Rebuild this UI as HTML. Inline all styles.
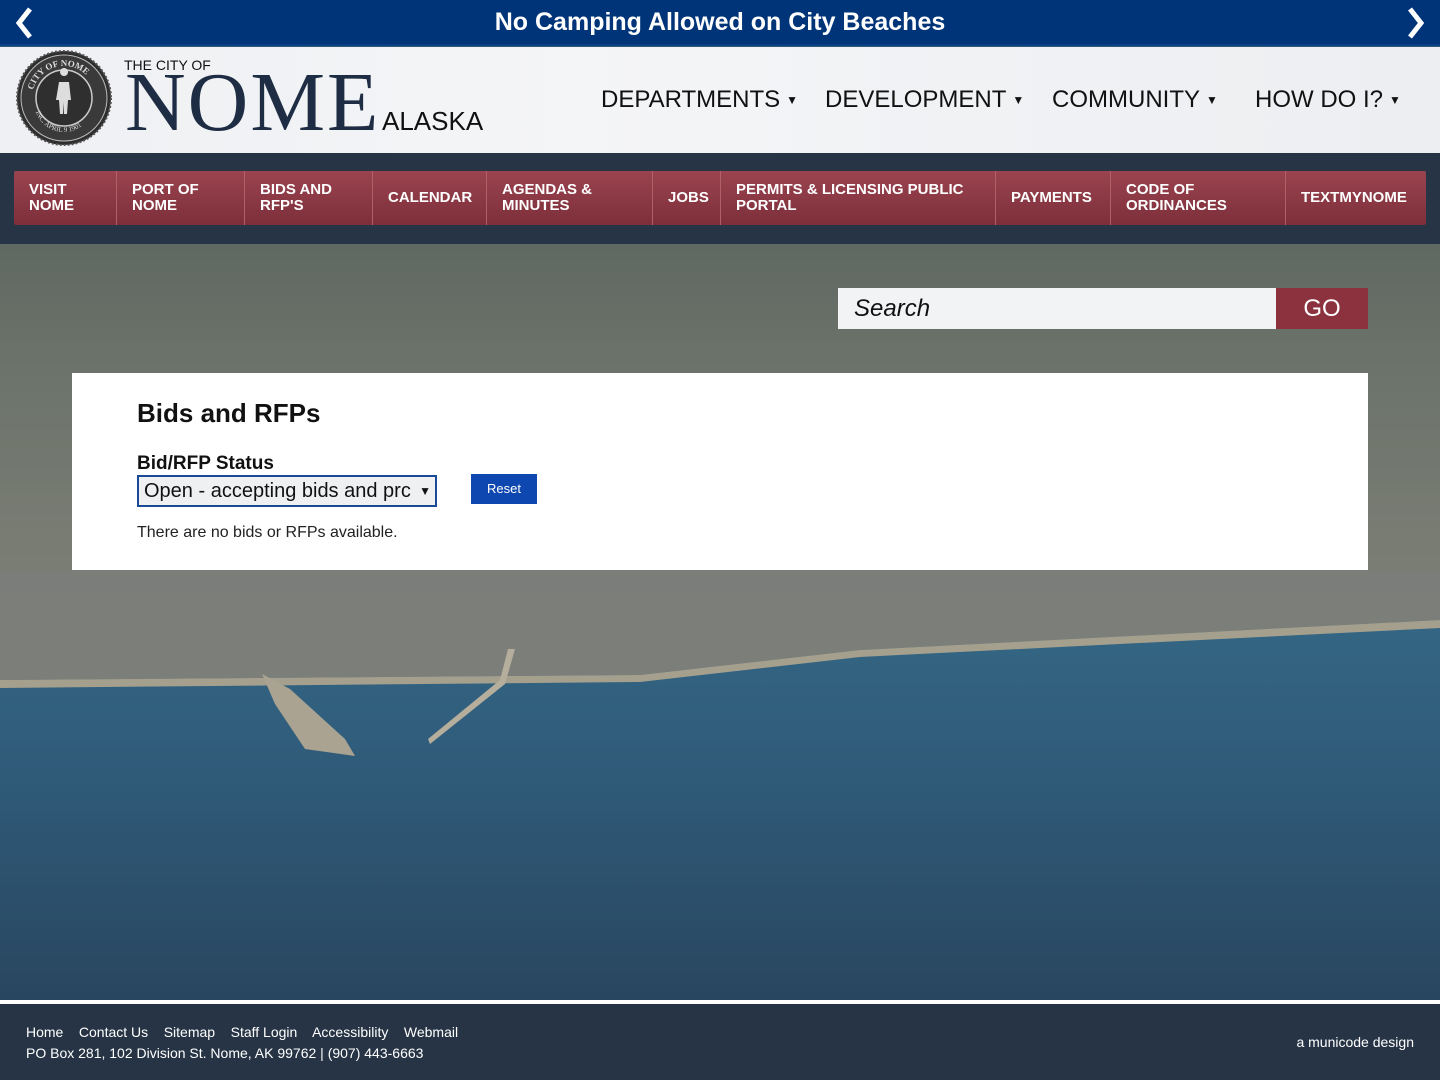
<!DOCTYPE html>
<html><head><meta charset="utf-8"><style>
*{margin:0;padding:0;box-sizing:border-box}
body{width:1440px;height:1080px;overflow:hidden;font-family:"Liberation Sans",sans-serif;position:relative;background:#2f5a78}
.a{position:absolute}
#top{left:0;top:0;width:1440px;height:46px;background:#003478;border-bottom:2px solid #0d3f86;color:#fff;text-align:center;font-weight:bold;font-size:25px;line-height:44px}
#hdr{left:0;top:47px;width:1440px;height:106px;background:linear-gradient(90deg,#eef0f3,#f4f5f7 40%,#eceef1)}
#navbg{left:0;top:153px;width:1440px;height:91px;background:#263445}
#nav{left:14px;top:171px;width:1412px;height:54px;display:flex;background:linear-gradient(#9b4450,#7c2f3a);border-radius:2px}
#nav div{color:#fff;font-weight:bold;font-size:15px;line-height:16px;padding:0 15px;display:flex;align-items:center;border-right:1px solid #b06068;height:54px}
#nav div:last-child{border-right:none}
.m{font-size:24px;color:#111;font-weight:normal;top:86px}
.m b{font-size:12px;font-weight:normal;margin-left:6px;position:relative;top:-3px}
#main{left:72px;top:373px;width:1296px;height:197px;background:#fff}
#foot{left:0;top:1000px;width:1440px;height:80px;background:#263445;border-top:4px solid #fff;color:#fff;font-size:14px}
</style></head><body>
<svg class="a" style="left:0;top:244px" width="1440" height="756">
<defs>
<linearGradient id="land" x1="0" y1="0" x2="0" y2="1">
<stop offset="0" stop-color="#5f6862"/><stop offset=".18" stop-color="#6d746b"/><stop offset=".45" stop-color="#7c7e75"/><stop offset=".75" stop-color="#86847b"/><stop offset="1" stop-color="#8e8b80"/></linearGradient>
<linearGradient id="sea" x1="0" y1="0" x2="0" y2="1">
<stop offset="0" stop-color="#346684"/><stop offset=".4" stop-color="#2f5b79"/><stop offset="1" stop-color="#294660"/></linearGradient>
</defs>
<rect width="1440" height="756" fill="url(#land)"/>
<path d="M0 326 L1440 326 L1440 376 L860 406 L640 431 L0 436Z" fill="#7a7d7c" opacity=".6"/>
<path d="M0 436 L640 431 L860 406 L1440 376 L1440 756 L0 756Z" fill="url(#sea)"/>
<path d="M0 436 L640 431 L860 406 L1440 376 L1440 384 L860 413 L640 438 L0 444Z" fill="#a59f8d"/>
<path d="M262 430 L275 460 L305 505 L355 512 L345 495 L290 445Z" fill="#aaa392"/>
<path d="M430 500 L505 440 L515 405 L508 405 L500 436 L428 495Z" fill="#b5ae9c"/>
</svg>
<div class="a" id="top">No Camping Allowed on City Beaches</div>
<svg class="a" style="left:12px;top:6px" width="24" height="34"><path d="M18 3 L7 17 L18 31" stroke="#fff" stroke-width="5" fill="none"/></svg>
<svg class="a" style="left:1404px;top:6px" width="24" height="34"><path d="M6 3 L17 17 L6 31" stroke="#fff" stroke-width="5" fill="none"/></svg>
<div class="a" id="hdr"></div>
<svg class="a" style="left:16px;top:50px" width="96" height="96" viewBox="0 0 96 96">
<circle cx="48" cy="48" r="47" fill="#2e2e2e" stroke="#555" stroke-width="2" stroke-dasharray="2 2"/>
<circle cx="48" cy="48" r="43" fill="#3a3a3a" stroke="#bbb" stroke-width="1"/>
<circle cx="48" cy="48" r="28" fill="#2f2f2f" stroke="#ccc" stroke-width="1.5"/>
<path d="M48 26 a4 4 0 1 1 0.1 0 M43 32 h10 l2 18 h-3 l-1 14 h-3 l0-12 l-1 12 h-3 l-1-14 h-3z" fill="#ddd"/>
<path id="arc" d="M16 48 A32 32 0 0 1 80 48" fill="none"/>
<text font-size="9" font-family="Liberation Serif" fill="#ddd" font-weight="bold"><textPath href="#arc" startOffset="8">CITY OF NOME</textPath></text>
<path id="arc2" d="M18 52 A30 30 0 0 0 78 52" fill="none"/>
<text font-size="7" font-family="Liberation Serif" fill="#ddd"><textPath href="#arc2" startOffset="10">INC. APRIL 9 1901</textPath></text>
</svg>
<div class="a" style="left:124px;top:57px;font-size:14px;color:#111">THE CITY OF</div>
<div class="a" style="left:125px;top:62px;font-family:'Liberation Serif',serif;font-size:84px;line-height:82px;color:#1f2d44;letter-spacing:2px">NOME</div>
<div class="a" style="left:382px;top:106px;font-size:26px;color:#111">ALASKA</div>
<div class="a m" style="left:601px">DEPARTMENTS<b>▼</b></div>
<div class="a m" style="left:825px">DEVELOPMENT<b>▼</b></div>
<div class="a m" style="left:1052px">COMMUNITY<b>▼</b></div>
<div class="a m" style="left:1255px">HOW DO I?<b>▼</b></div>
<div class="a" id="navbg"></div>
<div class="a" id="nav">
<div style="width:103px">VISIT<br>NOME</div>
<div style="width:128px">PORT OF<br>NOME</div>
<div style="width:128px">BIDS AND<br>RFP'S</div>
<div style="width:114px">CALENDAR</div>
<div style="width:166px">AGENDAS &amp;<br>MINUTES</div>
<div style="width:68px">JOBS</div>
<div style="width:275px">PERMITS &amp; LICENSING PUBLIC<br>PORTAL</div>
<div style="width:115px">PAYMENTS</div>
<div style="width:175px">CODE OF<br>ORDINANCES</div>
<div style="width:140px">TEXTMYNOME</div>
</div>
<div class="a" style="left:838px;top:288px;width:438px;height:41px;background:#f2f3f4;font-style:italic;font-size:24px;line-height:41px;padding-left:16px;color:#111">Search</div>
<div class="a" style="left:1276px;top:288px;width:92px;height:41px;background:#8b323e;color:#fff;font-size:24px;line-height:41px;text-align:center">GO</div>
<div class="a" id="main">
<div class="a" style="left:65px;top:25px;font-size:26px;font-weight:bold;color:#111">Bids and RFPs</div>
<div class="a" style="left:65px;top:80px;font-size:19px;font-weight:bold;color:#111">Bid/RFP Status</div>
<div class="a" style="left:65px;top:102px;width:300px;height:32px;border:2px solid #1a4a96;background:#eef0f2;font-size:20px;line-height:28px;padding-left:5px;color:#111;overflow:hidden;white-space:nowrap">Open - accepting bids and prc<span class="a" style="right:4px;top:0;font-size:12px;background:#eef0f2">▼</span></div>
<div class="a" style="left:399px;top:101px;width:66px;height:30px;background:#0e47b0;color:#fff;font-size:13px;line-height:30px;text-align:center">Reset</div>
<div class="a" style="left:65px;top:151px;font-size:16px;color:#222">There are no bids or RFPs available.</div>
</div>
<div class="a" id="foot">
<div class="a" style="left:26px;top:20px">Home&nbsp;&nbsp;&nbsp; Contact Us&nbsp;&nbsp;&nbsp; Sitemap&nbsp;&nbsp;&nbsp; Staff Login&nbsp;&nbsp;&nbsp; Accessibility&nbsp;&nbsp;&nbsp; Webmail</div>
<div class="a" style="left:26px;top:41px">PO Box 281, 102 Division St. Nome, AK 99762 | (907) 443-6663</div>
<div class="a" style="right:26px;top:30px">a municode design</div>
</div>
</body></html>
